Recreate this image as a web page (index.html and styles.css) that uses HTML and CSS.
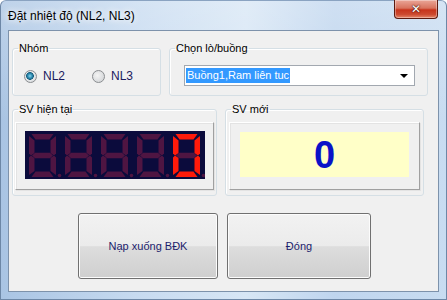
FILE: index.html
```html
<!DOCTYPE html>
<html lang="vi">
<head>
  <meta charset="UTF-8">
  <title>Đặt nhiệt độ (NL2, NL3)</title>
  <link rel="stylesheet" href="styles.css">
</head>
<body>
  <div class="window">
    <div class="titlebar">
      <span class="title">Đặt nhiệt độ (NL2, NL3)</span>
      <button class="close-btn">&#x2715;</button>
    </div>

    <div class="client">
      <div class="row">
        <fieldset class="group group-nhom">
          <legend>Nhóm</legend>
          <div class="radio-group">
            <label class="radio-option"><span class="radio checked"></span>NL2</label>
            <label class="radio-option"><span class="radio"></span>NL3</label>
          </div>
        </fieldset>

        <fieldset class="group group-lo">
          <legend>Chọn lò/buồng</legend>
          <div class="combo">
            <span class="combo-text">Buồng1,Ram liên tuc</span>
            <span class="combo-arrow"></span>
          </div>
        </fieldset>
      </div>

      <div class="row">
        <fieldset class="group group-sv">
          <legend>SV hiện tại</legend>
          <div class="panel">
            <div class="display">
              <svg width="180" height="48" viewBox="0 0 180 48">
                <defs>
                  <g id="seg-a"><polygon points="2.5,0 24.5,0 20.5,5.5 6.5,5.5"/></g>
                  <g id="seg-b"><polygon points="27,2 27,19.5 25,21.5 21.5,19 21.5,6.5"/></g>
                  <g id="seg-c"><polygon points="27,23.5 27,41 21.5,37 21.5,24 25,21.5"/></g>
                  <g id="seg-d"><polygon points="6.5,37.5 20.5,37.5 24.5,43 2.5,43"/></g>
                  <g id="seg-e"><polygon points="0,23.5 2,21.5 5.5,24 5.5,37 0,41"/></g>
                  <g id="seg-f"><polygon points="0,2 5.5,6.5 5.5,19 2,21.5 0,19.5"/></g>
                  <g id="seg-g"><polygon points="3,21.5 6,18.8 21,18.8 24,21.5 21,24.2 6,24.2"/></g>
                  <g id="dim8">
                    <use href="#seg-a"/><use href="#seg-b"/><use href="#seg-c"/><use href="#seg-d"/>
                    <use href="#seg-e"/><use href="#seg-f"/><use href="#seg-g"/>
                    <circle cx="30.5" cy="41.5" r="1.8"/>
                  </g>
                </defs>
                <g fill="#4f1542">
                  <use href="#dim8" x="4" y="3"/>
                  <use href="#dim8" x="40" y="3"/>
                  <use href="#dim8" x="76" y="3"/>
                  <use href="#dim8" x="112" y="3"/>
                  <use href="#seg-g" x="148" y="3"/>
                  <circle cx="178.5" cy="44.5" r="1.8"/>
                </g>
                <g fill="#ff1a0a">
                  <use href="#seg-a" x="148" y="3"/>
                  <use href="#seg-b" x="148" y="3"/>
                  <use href="#seg-c" x="148" y="3"/>
                  <use href="#seg-d" x="148" y="3"/>
                  <use href="#seg-e" x="148" y="3"/>
                  <use href="#seg-f" x="148" y="3"/>
                </g>
              </svg>
            </div>
          </div>
        </fieldset>

        <fieldset class="group group-new">
          <legend>SV mới</legend>
          <div class="panel">
            <div class="new-value">0</div>
          </div>
        </fieldset>
      </div>

      <div class="buttons">
        <button class="btn btn-load">Nạp xuống BĐK</button>
        <button class="btn btn-close">Đóng</button>
      </div>
    </div>
  </div>
</body>
</html>
```

FILE: styles.css
```css
html, body {
  margin: 0;
  padding: 0;
}
body {
  width: 447px;
  height: 300px;
  overflow: hidden;
  font-family: "Liberation Sans", Arial, sans-serif;
  font-size: 11px;
  color: #000;
}
.window {
  width: 447px;
  height: 300px;
  box-sizing: border-box;
  display: flex;
  flex-direction: column;
  background:
    linear-gradient(to bottom, rgba(255,255,255,0.25), rgba(255,255,255,0) 40%),
    linear-gradient(to right, #a9c4e3 0%, #c6daf0 30%, #d7e6f5 55%, #bfd5ee 75%, #c8dcf1 100%);
  border: 1px solid #6d87a6;
  border-top-color: #8aa3c1;
  border-radius: 6px 6px 0 0;
}
.titlebar {
  height: 29px;
  display: flex;
  justify-content: space-between;
  align-items: flex-start;
  padding-left: 7px;
}
.title {
  font-size: 12px;
  margin-top: 8px;
  text-shadow: 0 0 6px #fff, 0 0 8px #fff;
}
.close-btn {
  width: 44px;
  height: 19px;
  margin: -1px 8px 0 0;
  padding: 0;
  border: 1px solid #5b1a10;
  border-top: none;
  border-radius: 0 0 4px 4px;
  background: linear-gradient(to bottom, #eaa698 0%, #d8735e 45%, #c7341c 55%, #cc4a30 80%, #e5876a 100%);
  color: #fff;
  font-family: "DejaVu Sans", sans-serif;
  font-size: 12px;
  font-weight: bold;
  line-height: 17px;
  text-shadow: 0 0 1px #3a0a05, 0 0 2px #3a0a05;
  box-shadow: inset 0 0 0 1px rgba(255,255,255,0.35);
}
.client {
  flex: 1;
  margin: 0 7px 7px 7px;
  background: #f0f0f0;
  border: 1px solid #7d92ab;
  display: flex;
  flex-direction: column;
  padding: 11px 0 0 3px;
}
.row {
  display: flex;
  gap: 8px;
}
.row + .row {
  margin-top: 7px;
}
.group {
  margin: 0;
  padding: 0;
  box-sizing: border-box;
  border: 1px solid #d5dfe5;
  border-radius: 3px;
  box-shadow: inset 1px 1px 0 #fff;
}
.group legend {
  padding: 0 1px;
  margin-left: 5px;
  line-height: 13px;
}
.group-nhom {
  width: 147px;
  height: 54px;
}
.group-lo {
  width: 259px;
  height: 54px;
}
.radio-group {
  display: flex;
  margin: 14px 0 0 11px;
}
.radio-option {
  width: 68px;
  display: flex;
  align-items: center;
  gap: 6px;
  font-size: 12px;
  color: #1a1a5e;
}
.radio {
  width: 11px;
  height: 11px;
  border-radius: 50%;
  border: 1px solid #8a8d90;
  background: radial-gradient(circle at 40% 40%, #f4f4f4 0%, #d8dadc 70%, #e6e8ea 100%);
}
.radio.checked {
  background: radial-gradient(circle at 45% 45%, #8fd6f0 0%, #2f8fb4 25%, #1a5f7e 42%, #e7eaec 48%, #d6d8da 80%);
}
.combo {
  width: 231px;
  height: 21px;
  margin: 10px 0 0 14px;
  box-sizing: border-box;
  border: 1px solid #a2a8b0;
  background: #fff;
  display: flex;
  align-items: center;
  justify-content: space-between;
  padding: 0 6px 0 1px;
}
.combo-text {
  background: #3399ff;
  color: #fff;
  font-size: 11px;
  line-height: 15px;
  padding: 0 1px;
}
.combo-arrow {
  width: 0;
  height: 0;
  border-left: 4px solid transparent;
  border-right: 4px solid transparent;
  border-top: 4px solid #000;
}
.group-sv {
  width: 205px;
  height: 93px;
}
.group-new {
  width: 199px;
  height: 93px;
}
.panel {
  box-sizing: border-box;
  height: 68px;
  margin-top: 6px;
  border: 1px solid;
  border-color: #fff #a0a0a0 #a0a0a0 #fff;
  box-shadow: 1px 1px 0 #e3e3e3, inset 1px 1px 0 #e3e3e3;
  display: flex;
  align-items: center;
  justify-content: center;
  padding-bottom: 3px;
}
.group-sv .panel {
  width: 199px;
  margin-left: 2px;
}
.group-new .panel {
  width: 191px;
  margin-left: 3px;
}
.display {
  width: 180px;
  height: 48px;
  background: #0b0b3c;
}
.display svg {
  display: block;
}
.new-value {
  width: 169px;
  height: 45px;
  background: #ffffc8;
  color: #0a12c8;
  font-family: "Liberation Sans", Arial, sans-serif;
  font-weight: bold;
  font-size: 38px;
  line-height: 46px;
  text-align: center;
}
.buttons {
  display: flex;
  gap: 9px;
  margin: 17px 0 0 66px;
}
.btn {
  height: 66px;
  border: 1px solid #707070;
  border-radius: 3px;
  background: linear-gradient(to bottom, #f2f2f2 0%, #ebebeb 50%, #dddddd 51%, #cfcfcf 100%);
  box-shadow: inset 0 0 0 1px #fcfcfc;
  font-family: "Liberation Sans", Arial, sans-serif;
  font-size: 11px;
  color: #1c1c6c;
  padding: 0;
}
.btn-load {
  width: 140px;
}
.btn-close {
  width: 144px;
}
```
